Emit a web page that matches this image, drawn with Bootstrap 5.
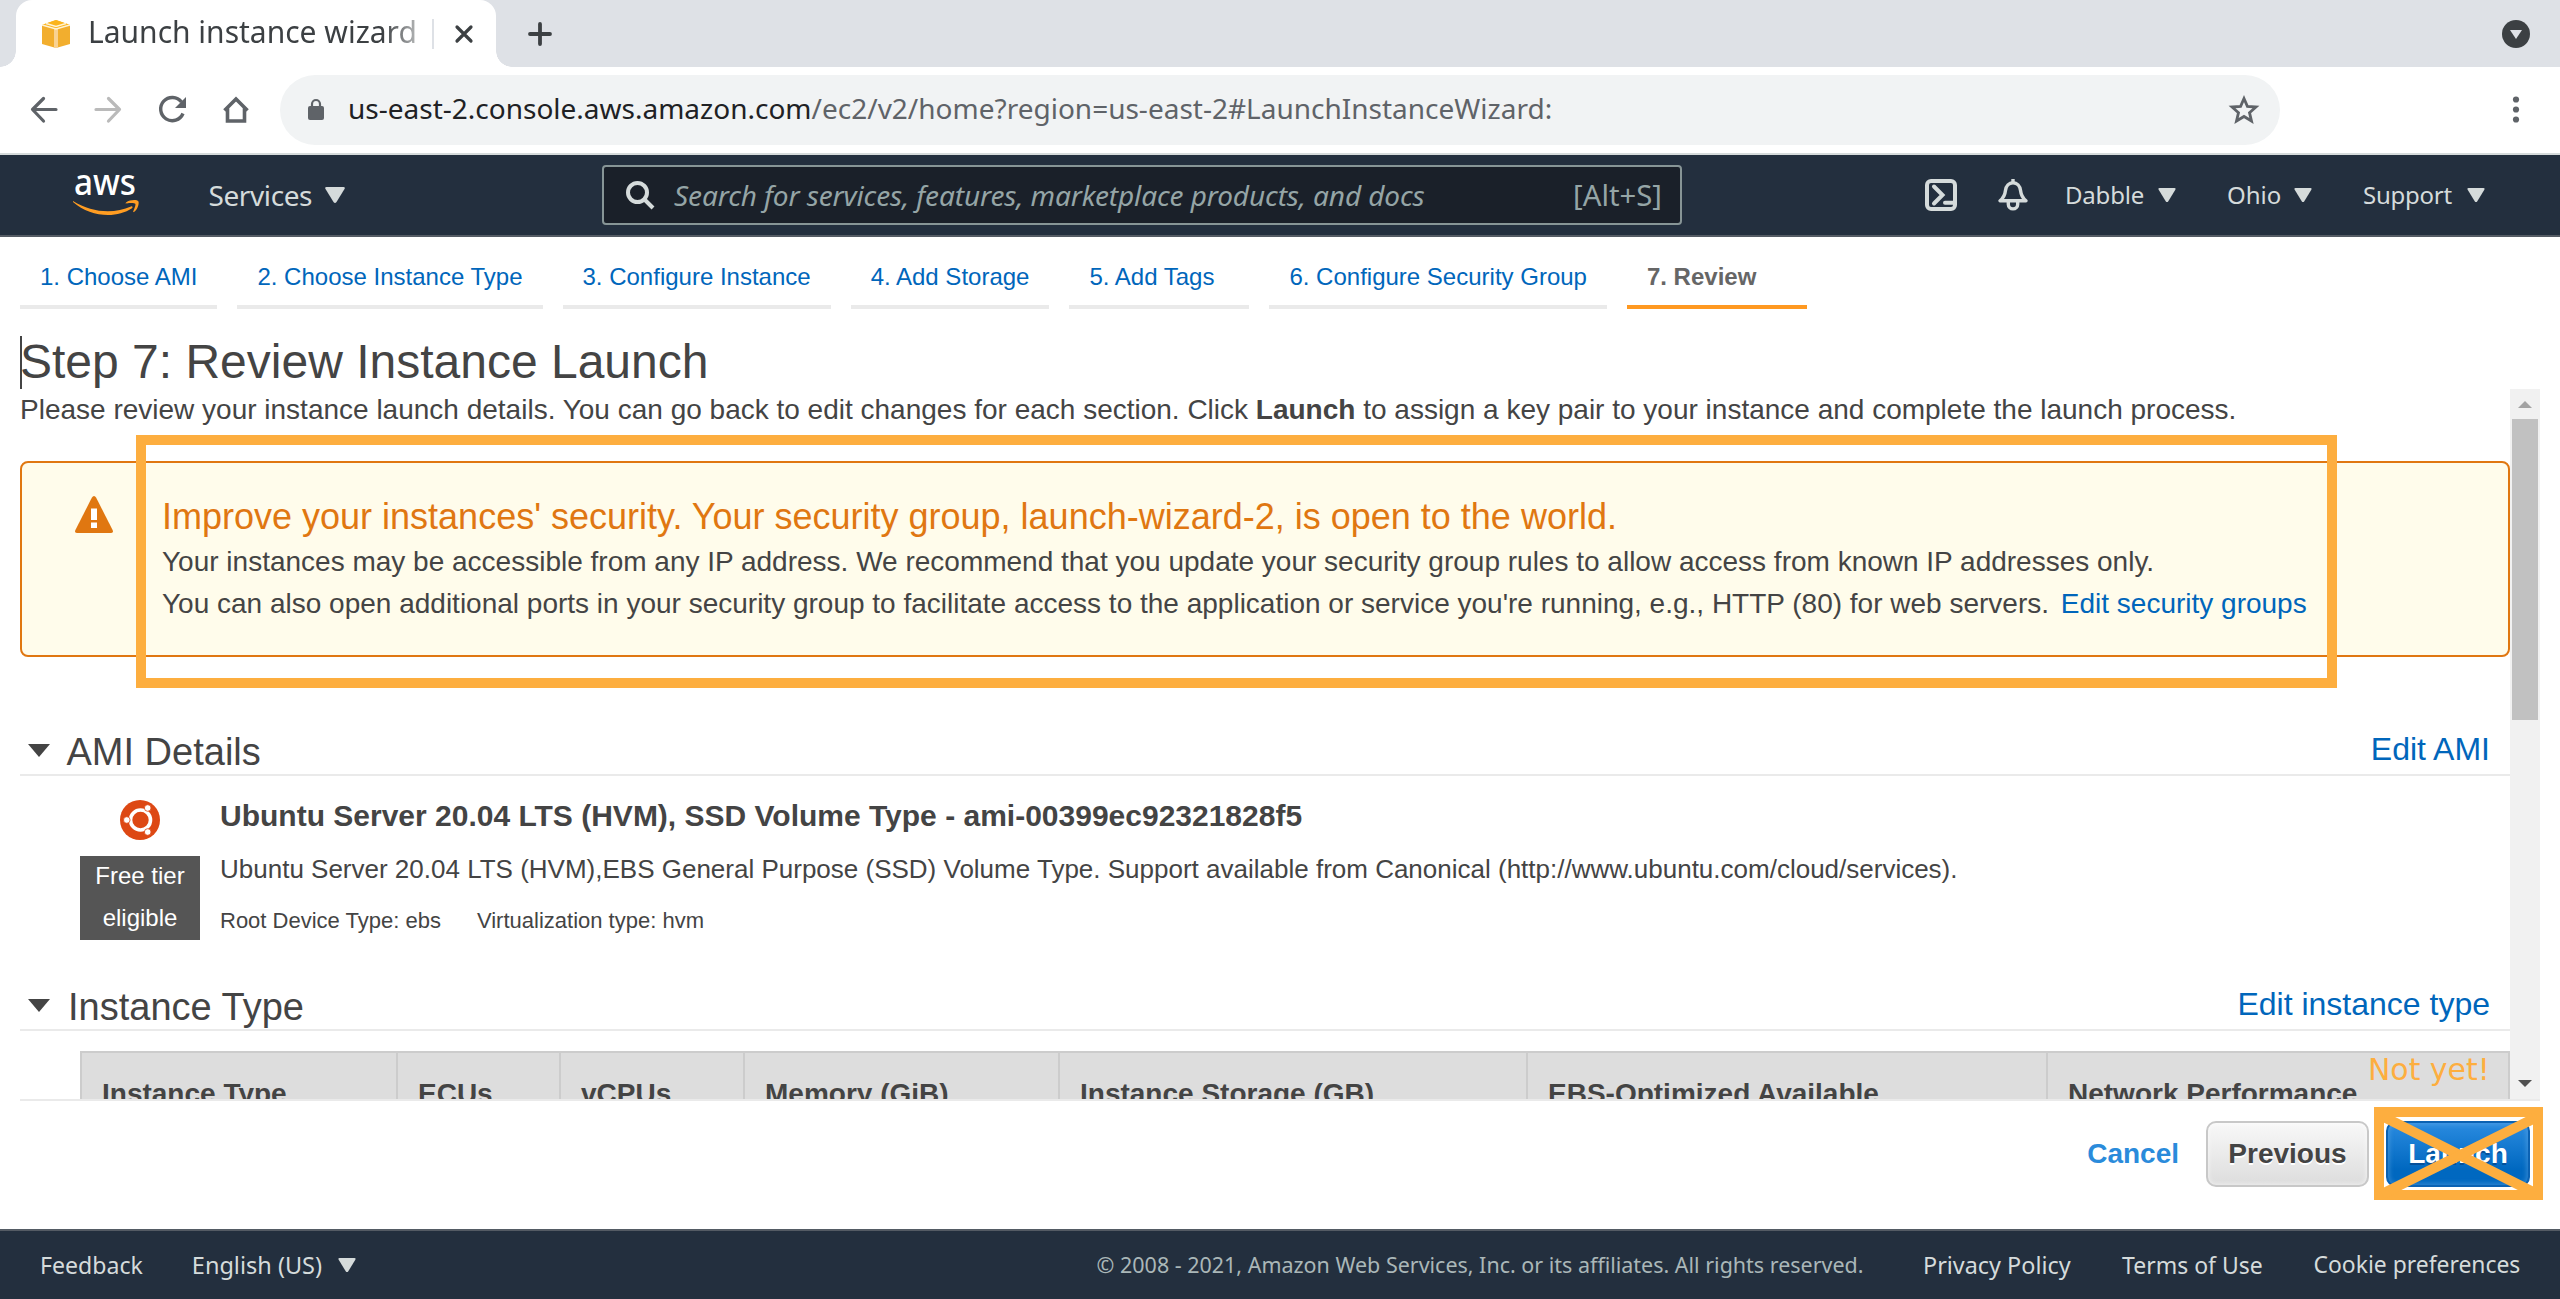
<!DOCTYPE html>
<html lang="en">
<head>
<meta charset="utf-8">
<meta name="viewport" content="width=device-width, initial-scale=1">
<title>Launch instance wizard | EC2 Management Console</title>
<link href="https://cdn.jsdelivr.net/npm/bootstrap@5.3.0/dist/css/bootstrap.min.css" rel="stylesheet">
<style>
  body { font-family: "Liberation Sans", Arial, sans-serif; font-size: 28px; line-height: 42px; color: #444; background: #fff; height: 1299px; overflow: hidden; }
  a { color: #0066bb; text-decoration: none; }
  svg { display: block; flex: none; }
  .noto { font-family: "Noto Sans", sans-serif; }

  /* browser chrome */
  .tabstrip { height: 67px; background: #dee1e6; }
  .browser-tab { width: 480px; height: 67px; margin-left: 16px; background: #fff; border-radius: 16px 16px 0 0; padding-left: 26px; position: relative; }
  .browser-tab::before, .browser-tab::after { content: ""; position: absolute; bottom: 0; width: 16px; height: 16px; }
  .browser-tab::before { left: -16px; background: radial-gradient(circle at 0 0, transparent 15.5px, #fff 16px); }
  .browser-tab::after { right: -16px; background: radial-gradient(circle at 100% 0, transparent 15.5px, #fff 16px); }
  .tab-title { font-size: 30px; line-height: 40px; width: 328px; margin-left: 18px; margin-bottom: 4px; white-space: nowrap; color: #3c4043; -webkit-mask-image: linear-gradient(90deg, #000 295px, rgba(0,0,0,.4) 328px); }
  .tab-split { width: 2px; height: 30px; background: #dee1e6; margin-left: 16px; }
  .toolbar { height: 88px; border-bottom: 2px solid #d5dbdb; padding-left: 27px; }
  .omnibox { width: 2000px; height: 70px; border-radius: 35px; background: #f1f3f4; margin-left: 27px; padding: 0 20px 0 26px; color: #5f6368; }
  .omnibox .address { font-size: 28px; margin-left: 22px; padding-bottom: 4px; }
  .omnibox b { font-weight: 400; color: #202124; }

  /* console header and footer */
  .console-nav { height: 82px; background: #232f3e; border-bottom: 2px solid #545b64; color: #d5dbdb; padding: 0 75px 0 71px; font-size: 24px; }
  .search-box { width: 1080px; height: 60px; border: 2px solid #879596; border-radius: 4px; background: #1a2029; color: #95a5a6; margin-left: 257px; padding: 0 18px 0 20px; }
  .search-box i { font-size: 28px; margin-left: 18px; letter-spacing: -.11px; }
  .console-foot { height: 70px; background: #232f3e; border-top: 2px solid #545b64; color: #d5dbdb; padding: 0 39px 1px 40px; font-size: 23px; }

  /* wizard */
  .step { font-size: 24px; line-height: 28px; padding: 26px 20px 14px; border-bottom: 4px solid #eaeaea; min-width: 180px; }
  .step-on { border-color: #ff9921; color: #666; font-weight: 700; }
  .wizard-title { font-size: 48px; line-height: 56px; margin: 25px 0 0 20px; height: 55px; font-weight: 400; color: #444; position: relative; }
  .wizard-title::before { content: ""; position: absolute; left: 0; top: 2px; width: 2px; height: 53px; background: #444; }
  .pane { height: 712px; margin: 0 20px; border-bottom: 2px solid #eaeaea; }
  .pane-body { width: 2490px; height: 710px; overflow: hidden; }
  .intro { line-height: 42px; height: 42px; margin-bottom: 30px; white-space: nowrap; }
  .warn { height: 196px; background: #fffceb; border: 2px solid #e07711; border-radius: 8px; padding: 28px 0 0 52px; }
  .warn-title { font-size: 36px; line-height: 52px; height: 50px; color: #e07711; font-weight: 400; margin: 0; }
  .warn svg { margin: 5px 48px 0 0; }
  .sect-head { height: 48px; border-bottom: 2px solid #eaeaea; padding: 0 20px 0 8px; }
  .sect-head h2 { font-size: 38px; line-height: 44px; margin: 0 0 0 16.5px; font-weight: 400; color: #444; }
  .sect-head a { font-size: 32px; line-height: 44px; margin-bottom: 3px; }
  .ami { height: 207px; padding: 22px 0 0 60px; line-height: 36px; }
  .ami-side { width: 120px; margin-right: 20px; padding-top: 2px; }
  .free-tier { background: #555; color: #fff; font-size: 24px; line-height: 42px; width: 120px; height: 84px; margin-top: 16px; text-align: center; padding: 0 10px; }
  .free-tier span { display: block; margin-top: -1px; }
  .ami-name { font-size: 30px; font-weight: 700; height: 53px; }
  .ami-desc { font-size: 26px; height: 55px; }
  .ami-meta { font-size: 22px; line-height: 30px; gap: 36px; }
  .type-grid { width: 2430px; margin: 20px 0 0 60px; table-layout: fixed; border-collapse: separate; border-spacing: 0; background: #ddd; border: 2px solid #ccc; border-bottom: 0; }
  .type-grid th { height: 90px; padding: 0 0 8px 20px; border-left: 2px solid #ccc; vertical-align: middle; white-space: nowrap; }
  .type-grid th:first-child { border-left: 0; }
  .scroller { width: 30px; height: 710px; background: #f1f1f1; }
  .scroller .thumb { width: 26px; height: 301px; background: #c1c1c1; margin: 11px auto 0; }
  .actions { height: 128px; padding: 20px 30px 0 0; line-height: 62px; font-weight: 700; }
  .actions a { color: #2a8bdb; margin-right: 27px; margin-top: 2px; }
  .btn-aws { height: 66px; padding: 0; font-size: 28px; font-weight: 700; line-height: 60px; border: 2px solid #c8c8c8; border-radius: 10px; color: #444; width: 163px; margin-right: 17px; background: linear-gradient(#f8f8f8, #ddd); text-shadow: 0 2px 0 #fff; box-shadow: inset 0 0 4px 1px rgba(255,255,255,.5); }
  .btn-go { width: 144px; margin: 0; color: #fff; border-color: #0b62b3; background: linear-gradient(#2a8be0, #0068c0 75%); text-shadow: 0 2px 0 #05509a; box-shadow: inset 0 0 4px 2px rgba(120,180,235,.35); }

  /* annotations drawn over the page */
  .note-frame { position: absolute; left: 136px; top: 434.500px; width: 2201px; height: 253.500px; border: 10px solid #fdae3f; }
  .note-cross { position: absolute; left: 2374px; top: 1107px; }
  .note-text { position: absolute; left: 2368px; top: 1048px; font: 29.9px/44px "DejaVu Sans", sans-serif; color: #fdae3f; white-space: nowrap; }
</style>
</head>
<body>
<header>
  <div class="tabstrip d-flex align-items-center noto">
    <div class="browser-tab d-flex align-items-center">
      <svg width="28" height="28" viewBox="0 0 28 28"><path d="M0 5 14 0l14 5v19l-14 4-14-4z" fill="#f2ae2e"/><path d="M1 4.500 14 0l13 4.500L14 9z" fill="#fbb41c"/><path d="M12 8h4v20h-4z" fill="#f9d292"/><path d="M0 5l14 4 14-4M4 3.500l10 3 10-3" fill="none" stroke="#fff3d6" stroke-width="1.500"/></svg>
      <div class="tab-title">Launch instance wizard</div>
      <div class="tab-split"></div>
      <svg class="ms-auto" style="margin-right:22px" width="20" height="20" viewBox="0 0 20 20"><path d="M3 3l14 14M17 3L3 17" stroke="#3c4043" stroke-width="3.200" stroke-linecap="round"/></svg>
    </div>
    <svg width="26" height="26" viewBox="0 0 26 26" style="margin-left:31px"><path d="M13 3v20M3 13h20" stroke="#3c4043" stroke-width="3.800" stroke-linecap="round"/></svg>
    <svg class="ms-auto" width="28" height="28" viewBox="0 0 28 28" style="margin-right:30px"><circle cx="14" cy="14" r="14" fill="#3c4043"/><path d="M8 10h12l-6 9z" fill="#dee1e6"/></svg>
  </div>
  <div class="toolbar d-flex align-items-center noto">
    <svg width="226" height="34" viewBox="27 92 226 34" fill="none" stroke="#5f6368" stroke-width="3.200">
      <path d="M56 108.500H33M43.500 97.500 32.500 108.500l11 11.500" stroke-linecap="round" stroke-linejoin="round"/>
      <path d="M96 108.500h23M108.500 97.500l11 11-11 11.500" stroke="#bababa" stroke-linecap="round" stroke-linejoin="round"/>
      <path d="M181.500 101A11.600 11.600 0 1 0 183 112.500" stroke-width="3.400"/>
      <path d="M186 96v11h-11z" fill="#5f6368" stroke="none"/>
      <path d="M224.500 109.500 236 98l11.500 11.500M227.500 107.500v12.500h17v-12.500" stroke-width="3.600"/>
    </svg>
    <div class="omnibox d-flex align-items-center">
      <svg width="20" height="24" viewBox="0 0 20 24"><rect x="2" y="8" width="16" height="14" rx="2" fill="#5f6368"/><path d="M6 9V6a4 4 0 0 1 8 0v3" fill="none" stroke="#5f6368" stroke-width="2.200"/></svg>
      <div class="address"><b>us-east-2.console.aws.amazon.com</b>/ec2/v2/home?region=us-east-2#LaunchInstanceWizard:</div>
      <svg class="ms-auto" width="32" height="32" viewBox="0 0 32 32"><path d="M16 4.500l3.400 7.800 8.600.7-6.500 5.700 2 8.300-7.500-4.500L8.500 27l2-8.300L4 13l8.600-.7z" fill="none" stroke="#5f6368" stroke-width="2.800"/></svg>
    </div>
    <svg class="ms-auto" width="10" height="28" viewBox="0 0 10 28" style="margin-right:39px" fill="#5f6368"><circle cx="5" cy="3.500" r="3.100"/><circle cx="5" cy="13.500" r="3.100"/><circle cx="5" cy="23.500" r="3.100"/></svg>
  </div>
  <nav class="console-nav d-flex align-items-center noto">
    <svg width="70" height="50" viewBox="71 170 70 50"><text x="74" y="195" font-family="Noto Sans, sans-serif" font-size="37" font-weight="500" fill="#fff" textLength="62" lengthAdjust="spacingAndGlyphs">aws</text><path d="M73 201C92 213 114 214 131 206.500c1.500-.6 2.200.8 1 1.800C116 219 90 217 73 202z" fill="#ff9d22"/><path d="M126 202.500c4-3 11-3 12.300-1.300S137.500 210 134 212c-.8.400-1 0-.7-.7 1-2.500 2.700-6.500 2-7.500s-5.500-.8-8.500-.4c-.9.100-1.200-.4-.8-.9z" fill="#ff9d22"/></svg>
    <div class="d-flex align-items-center" style="font-size:28px;margin-left:67.5px;width:136.5px"><span style="letter-spacing:-.4px;margin-top:-1px">Services</span><svg class="ms-auto" width="20" height="16" viewBox="0 0 20 16"><path d="M1.500 0h17q2 0 1 2l-8 13q-1.500 2-3 0l-8-13q-1-2 1-2z" fill="#d5dbdb"/></svg></div>
    <div class="search-box d-flex align-items-center">
      <svg width="32" height="32" viewBox="0 0 32 32" fill="none" stroke="#d5dbdb" stroke-width="4"><circle cx="13.500" cy="13.500" r="9.500"/><path d="M20.500 20.500 29 29"/></svg>
      <i>Search for services, features, marketplace products, and docs</i>
      <span class="ms-auto" style="font-size:29.3px">[Alt+S]</span>
    </div>
    <div class="ms-auto d-flex align-items-center">
      <svg width="32" height="32" viewBox="0 0 32 32" fill="none" stroke="#d5dbdb" stroke-width="4"><rect x="2" y="2" width="28" height="28" rx="4"/><path d="M9 7.500l8.500 8.500L9 24.500" stroke-linecap="round"/><path d="M20 23.700h10" stroke-linecap="round"/></svg>
      <svg style="margin:0 36px 0 40px" width="32" height="32" viewBox="0 0 32 32" fill="none" stroke="#d5dbdb" stroke-width="3.400"><path d="M3 21.800h26c-4-3-5-6-5.500-10.500C23 7 20 3.700 16 3.700S9 7 8.500 11.300C8 15.800 7 18.800 3 21.800z" stroke-linejoin="round"/><path d="M16 0v4M11.300 23v2.200a4.700 4.700 0 0 0 9.400 0V23"/></svg>
      <div class="d-flex align-items-center justify-content-between" style="width:111px"><span style="letter-spacing:-.2px">Dabble</span><svg width="18" height="14" viewBox="0 0 20 16"><path d="M1.500 0h17q2 0 1 2l-8 13q-1.500 2-3 0l-8-13q-1-2 1-2z" fill="#d5dbdb"/></svg></div>
      <div class="d-flex align-items-center justify-content-between" style="width:85px;margin:0 51px"><span>Ohio</span><svg width="18" height="14" viewBox="0 0 20 16"><path d="M1.500 0h17q2 0 1 2l-8 13q-1.500 2-3 0l-8-13q-1-2 1-2z" fill="#d5dbdb"/></svg></div>
      <div class="d-flex align-items-center justify-content-between" style="width:122px"><span style="letter-spacing:-.25px">Support</span><svg width="18" height="14" viewBox="0 0 20 16"><path d="M1.500 0h17q2 0 1 2l-8 13q-1.500 2-3 0l-8-13q-1-2 1-2z" fill="#d5dbdb"/></svg></div>
    </div>
  </nav>
</header>

<main>
  <div class="d-flex" style="gap:20px;margin-left:20px">
    <a href="#" class="step">1. Choose AMI</a>
    <a href="#" class="step">2. Choose Instance Type</a>
    <a href="#" class="step">3. Configure Instance</a>
    <a href="#" class="step">4. Add Storage</a>
    <a href="#" class="step">5. Add Tags</a>
    <a href="#" class="step">6. Configure Security Group</a>
    <span class="step step-on">7. Review</span>
  </div>
  <h1 class="wizard-title">Step 7: Review Instance Launch</h1>
  <div class="pane d-flex">
    <div class="pane-body">
      <div class="intro">Please review your instance launch details. You can go back to edit changes for each section. Click <strong>Launch</strong> to assign a key pair to your instance and complete the launch process.</div>
      <div class="warn d-flex align-items-start">
        <svg width="40" height="38" viewBox="0 0 40 38"><path d="M17.800 1.800q2.200-3.600 4.400 0L38.600 34q1.200 3-2 3H3.400q-3.200 0-2-3z" fill="#e07711"/><path d="M17 12.500h6v11.500h-6zM17 26.500h6v5.500h-6z" fill="#fff"/></svg>
        <div>
          <h3 class="warn-title">Improve your instances' security. Your security group, launch-wizard-2, is open to the world.</h3>
          <div>Your instances may be accessible from any IP address. We recommend that you update your security group rules to allow access from known IP addresses only.</div>
          <div>You can also open additional ports in your security group to facilitate access to the application or service you're running, e.g., HTTP (80) for web servers. <a href="#" style="margin-left:4px">Edit security groups</a></div>
        </div>
      </div>
      <div class="sect-head d-flex align-items-end" style="margin-top:71px">
        <svg width="22" height="14" viewBox="0 0 22 14" style="margin-bottom:16px"><path d="M0 0h22L11 13z" fill="#444"/></svg>
        <h2>AMI Details</h2>
        <a href="#" class="ms-auto">Edit AMI</a>
      </div>
      <div class="ami d-flex">
        <div class="ami-side">
          <svg class="mx-auto" width="40" height="40" viewBox="0 0 40 40"><circle cx="20" cy="20" r="20" fill="#dd4814"/><circle cx="20.500" cy="20" r="10" fill="none" stroke="#fff" stroke-width="3.600"/><g fill="#fff" stroke="#dd4814" stroke-width=".8"><circle cx="6.800" cy="20" r="3.300"/><circle cx="27.700" cy="8" r="3.300"/><circle cx="27.700" cy="32" r="3.300"/></g></svg>
          <div class="free-tier d-flex"><span>Free tier eligible</span></div>
        </div>
        <div>
          <div class="ami-name">Ubuntu Server 20.04 LTS (HVM), SSD Volume Type - ami-00399ec92321828f5</div>
          <div class="ami-desc">Ubuntu Server 20.04 LTS (HVM),EBS General Purpose (SSD) Volume Type. Support available from Canonical (http://www.ubuntu.com/cloud/services).</div>
          <div class="ami-meta d-flex"><span>Root Device Type: ebs</span><span>Virtualization type: hvm</span></div>
        </div>
      </div>
      <div class="sect-head d-flex align-items-end">
        <svg width="22" height="14" viewBox="0 0 22 14" style="margin-bottom:16px"><path d="M0 0h22L11 13z" fill="#444"/></svg>
        <h2 style="margin-left:18px">Instance Type</h2>
        <a href="#" class="ms-auto">Edit instance type</a>
      </div>
      <table class="type-grid">
        <colgroup><col style="width:314px"><col style="width:163px"><col style="width:184px"><col style="width:315px"><col style="width:468px"><col style="width:520px"><col></colgroup>
        <thead><tr><th>Instance Type</th><th>ECUs</th><th>vCPUs</th><th>Memory (GiB)</th><th>Instance Storage (GB)</th><th>EBS-Optimized Available</th><th>Network Performance</th></tr></thead>
      </table>
    </div>
    <div class="scroller">
      <svg width="30" height="19" viewBox="0 0 30 19"><path d="M8 19h14l-7-7z" fill="#a3a3a3"/></svg>
      <div class="thumb"></div>
      <svg width="30" height="7" viewBox="0 0 30 7" style="margin-top:360px"><path d="M8 0h14l-7 7z" fill="#505050"/></svg>
    </div>
  </div>
  <div class="actions d-flex align-items-start justify-content-end">
    <a href="#">Cancel</a>
    <button type="button" class="btn btn-aws">Previous</button>
    <button type="button" class="btn btn-aws btn-go">Launch</button>
  </div>
</main>

<footer class="console-foot d-flex align-items-center noto">
  <span style="font-size:23.1px">Feedback</span>
  <span style="font-size:23.5px;margin-left:49px">English (US)</span>
  <svg width="18" height="14" viewBox="0 0 20 16" style="margin-left:16px"><path d="M1.500 0h17q2 0 1 2l-8 13q-1.500 2-3 0l-8-13q-1-2 1-2z" fill="#d5dbdb"/></svg>
  <span class="ms-auto" style="font-size:21.47px;color:#aab7b8">© 2008 - 2021, Amazon Web Services, Inc. or its affiliates. All rights reserved.</span>
  <span style="margin-left:59.5px;width:199px;font-size:23.4px">Privacy Policy</span>
  <span style="width:191.5px">Terms of Use</span>
  <span class="text-nowrap" style="width:207.500px;font-size:22.900px">Cookie preferences</span>
</footer>

<div class="note-frame"></div>
<div class="note-text">Not yet!</div>
<svg class="note-cross" width="169" height="93" viewBox="0 0 169 93" fill="none" stroke="#fdae3f" stroke-width="10"><path d="M5 5h159v83H5zM10 10l153 77"/><path d="M163 10 8 87"/></svg>
<script src="https://cdn.jsdelivr.net/npm/bootstrap@5.3.0/dist/js/bootstrap.bundle.min.js"></script>
</body>
</html>
